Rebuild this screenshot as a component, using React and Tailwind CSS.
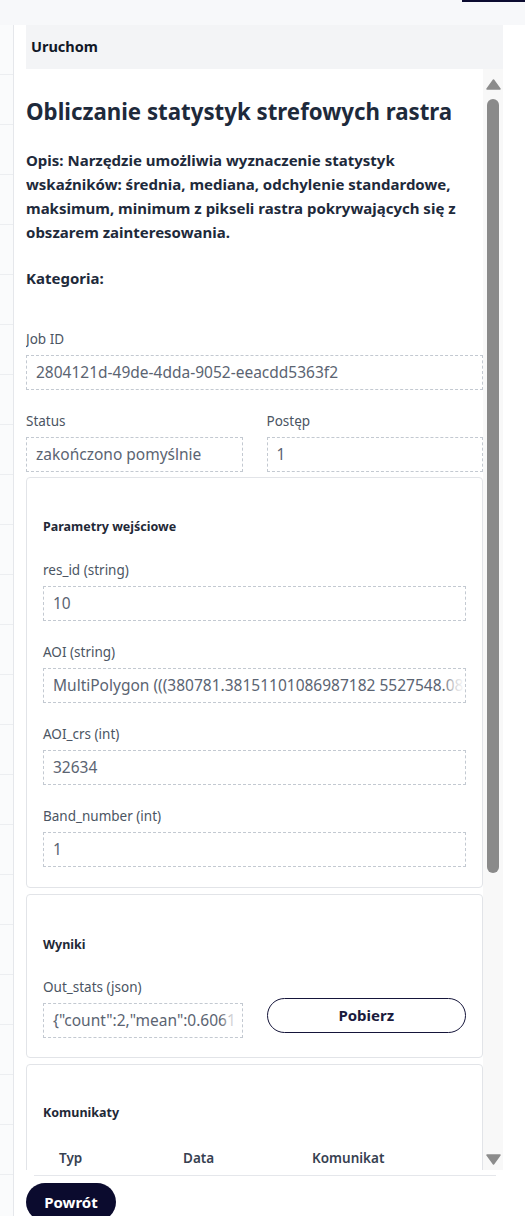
import React from "react";

function Field({ label, value, fade }) {
  return (
    <div className="flex flex-col min-w-0">
      <div className="text-[13.5px] leading-[20px] text-[#4b5563] mb-[6px]">{label}</div>
      <div className="relative h-[35px] border border-dashed border-[#c3c9d1] pl-[9px] pr-[4px] flex items-center overflow-hidden">
        <span className="text-[15.5px] text-[#5b6472] whitespace-nowrap">{value}</span>
        {fade ? (
          <div className="absolute right-0 top-0 bottom-0 w-[22px] bg-linear-to-l from-white via-white/70 to-transparent" />
        ) : null}
      </div>
    </div>
  );
}

function Arrow({ up }) {
  return (
    <svg width="15" height="11" viewBox="0 0 15 11" className={up ? "" : "rotate-180"}>
      <path d="M7.5 1 L14 10 L1 10 Z" fill="#8c8c8c" stroke="#8c8c8c" strokeWidth="1.5" strokeLinejoin="round" />
    </svg>
  );
}

export default function App() {
  const rows = Array.from({ length: 24 });
  return (
    <div className="w-[525px] h-[1216px] overflow-hidden bg-white font-['Noto_Sans',sans-serif]">
      <div className="relative h-[25px] bg-[#f7f8fa]">
        <div className="absolute right-0 top-0 w-[63px] h-[2px] bg-[#0b0b30]" />
      </div>
      <div className="flex h-[1191px]">
        <div className="w-[14px] shrink-0 border-r border-[#e5e7eb] bg-[#fafbfc] flex flex-col">
          {rows.map((_, i) => (
            <div key={i} className="h-[50px] shrink-0 border-b border-[#eceef1]" />
          ))}
        </div>
        <div className="ml-[12px] w-[477px] flex flex-col">
          <div className="h-[44px] shrink-0 bg-[#f3f4f6] flex items-center pl-[5px]">
            <span className="text-[14.5px] font-bold text-[#111827]">Uruchom</span>
          </div>
          <div className="flex h-[1101px] shrink-0">
            <div className="w-[457px] overflow-hidden pt-[27px]">
              <h1 className="text-[22.25px] leading-[32px] font-bold text-[#1e2a3b] whitespace-nowrap">
                Obliczanie statystyk strefowych rastra
              </h1>
              <p className="mt-[20px] text-[15px] leading-[24px] font-bold text-[#1e2a3b] whitespace-nowrap">
                Opis: Narzędzie umożliwia wyznaczenie statystyk
                <br />
                wskaźników: średnia, mediana, odchylenie standardowe,
                <br />
                maksimum, minimum z pikseli rastra pokrywających się z
                <br />
                obszarem zainteresowania.
              </p>
              <p className="mt-[22px] text-[15px] leading-[24px] font-bold text-[#1e2a3b]">Kategoria:</p>

              <div className="mt-[39px]">
                <Field label="Job ID" value="2804121d-49de-4dda-9052-eeacdd5363f2" />
              </div>
              <div className="mt-[21px] grid grid-cols-2 gap-x-[24px]">
                <Field label="Status" value="zakończono pomyślnie" />
                <Field label="Postęp" value="1" />
              </div>

              <div className="mt-[5px] border border-[#e2e4e8] rounded-[4px] pt-[40px] px-4 pb-[20px]">
                <div className="text-[12.5px] leading-[18px] font-bold text-[#1f2937]">Parametry wejściowe</div>
                <div className="mt-[24px] flex flex-col gap-[21px]">
                  <Field label="res_id (string)" value="10" />
                  <Field label="AOI (string)" value="MultiPolygon (((380781.38151101086987182 5527548.085" fade />
                  <Field label="AOI_crs (int)" value="32634" />
                  <Field label="Band_number (int)" value="1" />
                </div>
              </div>

              <div className="mt-[6px] border border-[#e2e4e8] rounded-[4px] pt-[41px] px-4 pb-[19px]">
                <div className="text-[12.5px] leading-[18px] font-bold text-[#1f2937]">Wyniki</div>
                <div className="mt-[23px] grid grid-cols-2 gap-x-[24px]">
                  <Field label="Out_stats (json)" value={'{"count":2,"mean":0.6061'} fade />
                  <button className="self-end mb-[5px] h-[35px] rounded-full border border-[#15153a] bg-white text-[15px] font-bold text-[#1b1b3d]">
                    Pobierz
                  </button>
                </div>
              </div>

              <div className="mt-[6px] border border-[#e2e4e8] rounded-[4px] pt-[39px] px-4 pb-[20px] h-[200px]">
                <div className="text-[12.5px] leading-[18px] font-bold text-[#1f2937]">Komunikaty</div>
                <div className="mt-[26px] flex text-[13.5px] leading-[20px] font-semibold text-[#374151]">
                  <div className="w-[124px] pl-4">Typ</div>
                  <div className="w-[129px] pl-4">Data</div>
                  <div className="pl-4">Komunikat</div>
                </div>
              </div>
            </div>
            <div className="w-[20px] bg-[#f8f8f8] flex flex-col items-center pt-[10px] pb-[5px]">
              <Arrow up />
              <div className="mt-[9px] w-[12px] h-[774px] rounded-full bg-[#8a8a8a]" />
              <div className="flex-1" />
              <Arrow />
            </div>
          </div>
          <div className="mt-[5px] ml-[8px] mr-[7px] border-t border-[#e5e7eb]" />
          <div className="mt-[7px]">
            <button className="w-[90px] h-[38px] rounded-full bg-[#0b0b2e] text-white text-[15px] font-bold">
              Powrót
            </button>
          </div>
        </div>
      </div>
    </div>
  );
}
